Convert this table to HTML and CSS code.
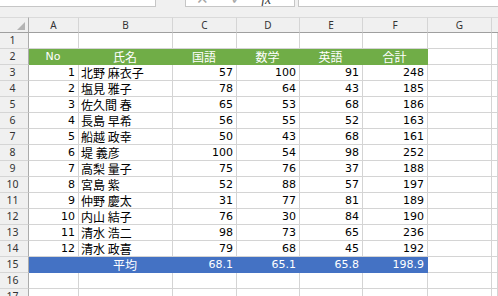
FILE: index.html
```html
<!DOCTYPE html>
<html lang="ja">
<head>
<meta charset="utf-8">
<link rel="stylesheet" href="styles.css">
</head>
<body>
<div class="topbar">
  <div class="namebox"></div>
  <div class="fxbox"><span class="ico x">✕</span><span class="ico ok">✓</span><span class="fx">fx</span></div>
  <div class="formula"></div>
</div>
<div class="sheet">
  <div class="ch corner"><span class="tri"></span></div>
  <div class="ch">A</div><div class="ch">B</div><div class="ch">C</div><div class="ch">D</div><div class="ch">E</div><div class="ch">F</div><div class="ch">G</div><div class="ch last"></div>

  <div class="rh">1</div><div class="c"></div><div class="c"></div><div class="c"></div><div class="c"></div><div class="c"></div><div class="c"></div><div class="c"></div><div class="c"></div>

  <div class="rh">2</div><div class="c g ctr">No</div><div class="c g ctr jp">氏名</div><div class="c g ctr jp">国語</div><div class="c g ctr jp">数学</div><div class="c g ctr jp">英語</div><div class="c g ctr jp">合計</div><div class="c"></div><div class="c"></div>

  <div class="rh">3</div><div class="c num">1</div><div class="c jp">北野 麻衣子</div><div class="c num">57</div><div class="c num">100</div><div class="c num">91</div><div class="c num">248</div><div class="c"></div><div class="c"></div>
  <div class="rh">4</div><div class="c num">2</div><div class="c jp">塩見 雅子</div><div class="c num">78</div><div class="c num">64</div><div class="c num">43</div><div class="c num">185</div><div class="c"></div><div class="c"></div>
  <div class="rh">5</div><div class="c num">3</div><div class="c jp">佐久間 春</div><div class="c num">65</div><div class="c num">53</div><div class="c num">68</div><div class="c num">186</div><div class="c"></div><div class="c"></div>
  <div class="rh">6</div><div class="c num">4</div><div class="c jp">長島 早希</div><div class="c num">56</div><div class="c num">55</div><div class="c num">52</div><div class="c num">163</div><div class="c"></div><div class="c"></div>
  <div class="rh">7</div><div class="c num">5</div><div class="c jp">船越 政幸</div><div class="c num">50</div><div class="c num">43</div><div class="c num">68</div><div class="c num">161</div><div class="c"></div><div class="c"></div>
  <div class="rh">8</div><div class="c num">6</div><div class="c jp">堤 義彦</div><div class="c num">100</div><div class="c num">54</div><div class="c num">98</div><div class="c num">252</div><div class="c"></div><div class="c"></div>
  <div class="rh">9</div><div class="c num">7</div><div class="c jp">高梨 量子</div><div class="c num">75</div><div class="c num">76</div><div class="c num">37</div><div class="c num">188</div><div class="c"></div><div class="c"></div>
  <div class="rh">10</div><div class="c num">8</div><div class="c jp">宮島 紫</div><div class="c num">52</div><div class="c num">88</div><div class="c num">57</div><div class="c num">197</div><div class="c"></div><div class="c"></div>
  <div class="rh">11</div><div class="c num">9</div><div class="c jp">仲野 慶太</div><div class="c num">31</div><div class="c num">77</div><div class="c num">81</div><div class="c num">189</div><div class="c"></div><div class="c"></div>
  <div class="rh">12</div><div class="c num">10</div><div class="c jp">内山 結子</div><div class="c num">76</div><div class="c num">30</div><div class="c num">84</div><div class="c num">190</div><div class="c"></div><div class="c"></div>
  <div class="rh">13</div><div class="c num">11</div><div class="c jp">清水 浩二</div><div class="c num">98</div><div class="c num">73</div><div class="c num">65</div><div class="c num">236</div><div class="c"></div><div class="c"></div>
  <div class="rh">14</div><div class="c num">12</div><div class="c jp">清水 政喜</div><div class="c num">79</div><div class="c num">68</div><div class="c num">45</div><div class="c num">192</div><div class="c"></div><div class="c"></div>

  <div class="rh">15</div><div class="c b"></div><div class="c b ctr jp">平均</div><div class="c b num">68.1</div><div class="c b num">65.1</div><div class="c b num">65.8</div><div class="c b num">198.9</div><div class="c"></div><div class="c"></div>

  <div class="rh">16</div><div class="c"></div><div class="c"></div><div class="c"></div><div class="c"></div><div class="c"></div><div class="c"></div><div class="c"></div><div class="c"></div>
  <div class="rh">17</div><div class="c"></div><div class="c"></div><div class="c"></div><div class="c"></div><div class="c"></div><div class="c"></div><div class="c"></div><div class="c"></div>
</div>
</body>
</html>
```

FILE: styles.css
```css
html, body {
  margin: 0;
  padding: 0;
  background: #ffffff;
  overflow: hidden;
}

.topbar {
  display: flex;
  height: 17px;
  background: #f0f0f0;
}

.namebox {
  width: 156px;
  height: 7px;
  box-sizing: border-box;
  background: #ffffff;
  border-right: 1px solid #c6c6c6;
  border-bottom: 1px solid #c6c6c6;
}

.fxbox {
  margin-left: 29px;
  width: 110px;
  height: 7px;
  box-sizing: border-box;
  background: #ffffff;
  border: 1px solid #c6c6c6;
  border-top: none;
  display: flex;
  align-items: flex-end;
  overflow: hidden;
}

.ico {
  font-family: "DejaVu Sans", sans-serif;
  font-size: 15px;
  line-height: 13px;
  color: #a6a6a6;
}

.ico.x { margin-left: 10px; }
.ico.ok { margin-left: 22px; }

.fx {
  margin-left: 18px;
  font-family: "Liberation Serif", serif;
  font-style: italic;
  font-size: 14px;
  line-height: 12px;
  color: #404040;
}

.formula {
  margin-left: 3px;
  flex: 1;
  height: 7px;
  box-sizing: border-box;
  background: #ffffff;
  border-left: 1px solid #c6c6c6;
  border-bottom: 1px solid #c6c6c6;
}

.sheet {
  display: grid;
  grid-template-columns: 29px 50px 94px 64px 63px 63px 65px 64px 1fr;
  grid-auto-rows: 16px;
}

.ch {
  box-sizing: border-box;
  background: #f0f0f0;
  border-top: 1px solid #dadada;
  border-right: 1px solid #d5d5d5;
  border-bottom: 1px solid #9f9f9f;
  font-family: "Noto Sans", sans-serif;
  font-size: 10px;
  line-height: 14px;
  color: #333333;
  text-align: center;
}

.ch.corner {
  position: relative;
  border-right: 1px solid #ababab;
}

.ch.last { border-right: none; }

.tri {
  position: absolute;
  right: 3px;
  bottom: 2px;
  width: 0;
  height: 0;
  border-left: 8px solid transparent;
  border-bottom: 8px solid #b4b4b4;
}

.rh {
  box-sizing: border-box;
  background: #f0f0f0;
  border-right: 1px solid #ababab;
  border-bottom: 1px solid #d5d5d5;
  font-family: "Noto Sans", sans-serif;
  font-size: 10.5px;
  line-height: 15px;
  color: #333333;
  text-align: center;
  padding-right: 3px;
}

.c {
  box-sizing: border-box;
  border-right: 1px solid #d4d4d4;
  border-bottom: 1px solid #d4d4d4;
  font-family: "DejaVu Sans", "Noto Sans CJK JP", sans-serif;
  font-size: 11px;
  line-height: 16px;
  color: #000000;
  padding: 0 3px 0 2px;
  white-space: nowrap;
  overflow: hidden;
}

.jp {
  font-family: "Noto Sans CJK JP", sans-serif;
  font-size: 12px;
  line-height: 15px;
}

.num { text-align: right; }
.ctr { text-align: center; }

.g {
  background: #70ad47;
  border-color: #70ad47;
  color: #ffffff;
}

.b {
  background: #4472c4;
  border-color: #4472c4;
  color: #ffffff;
}
```
